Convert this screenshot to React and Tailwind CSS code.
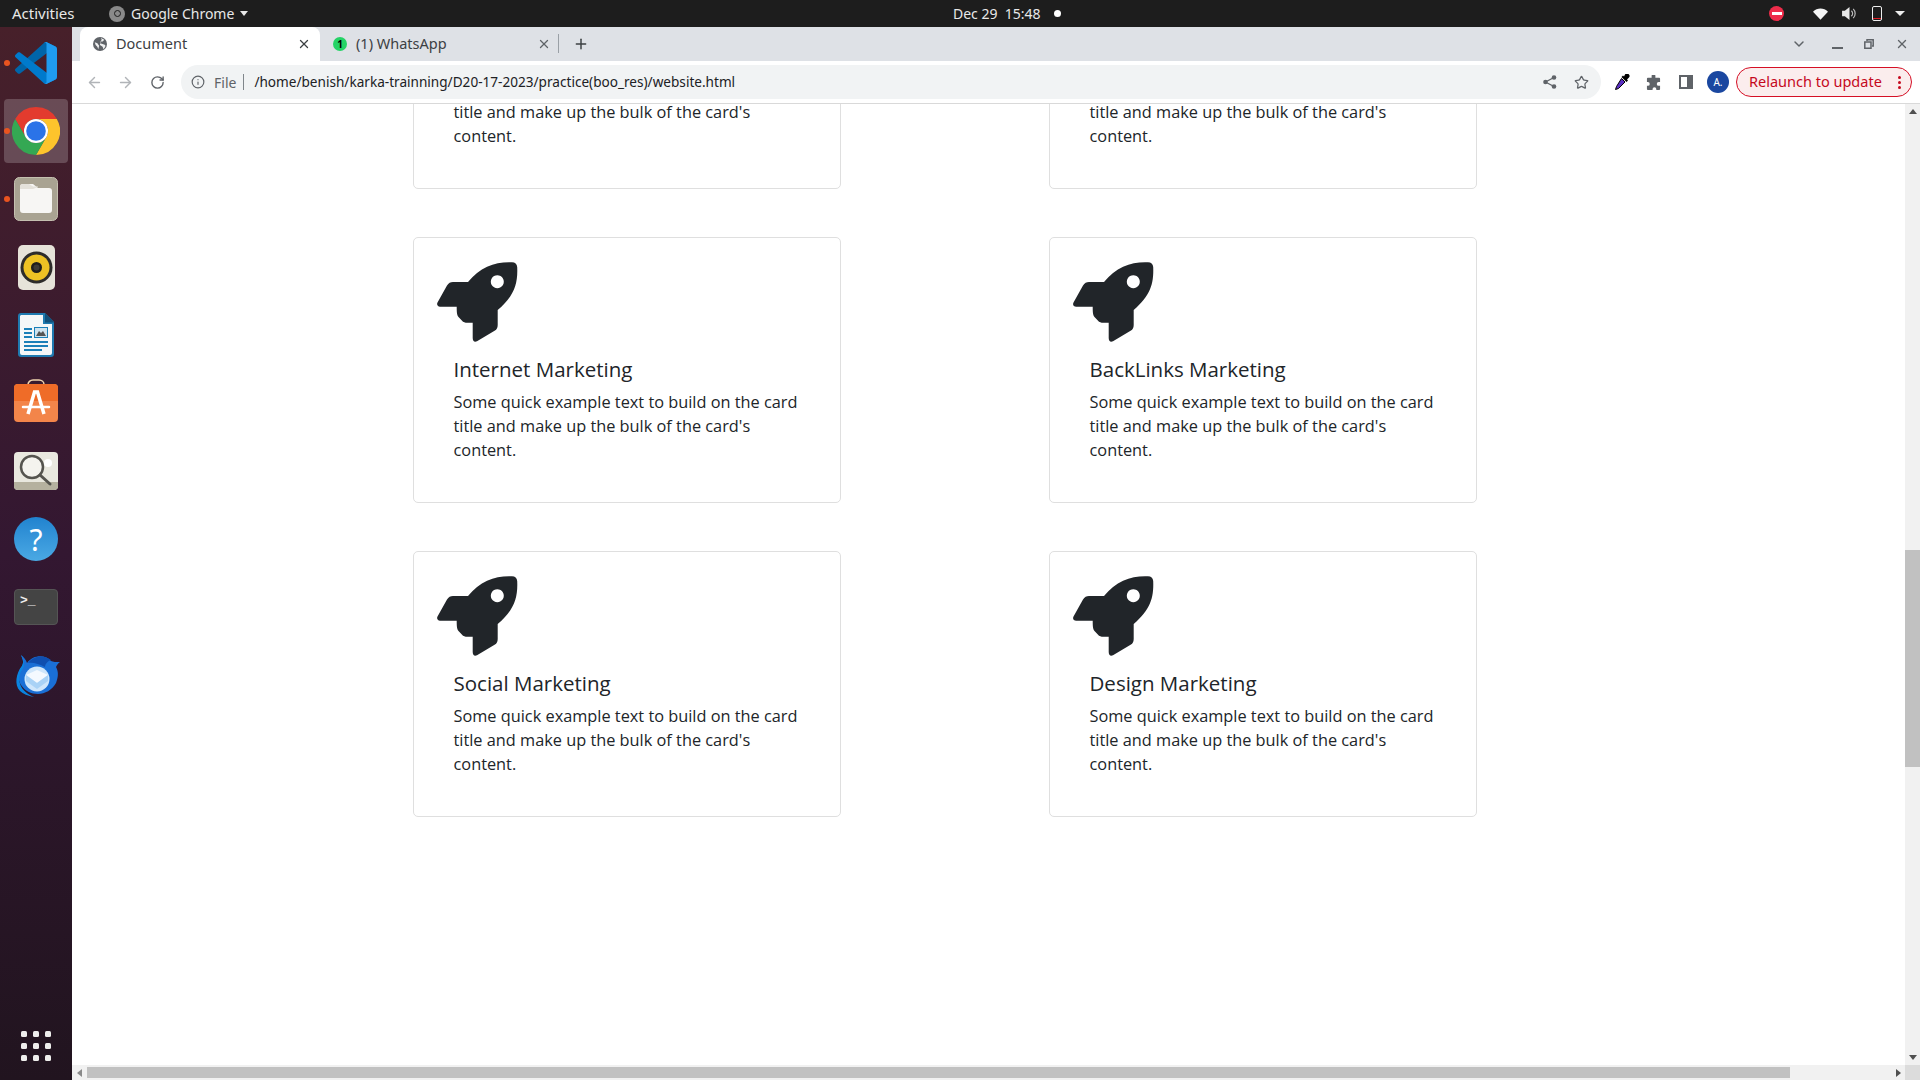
import { ArrowLeft, ArrowRight, RotateCw, Info, Star, X, Plus, ChevronDown } from 'lucide-react'

const topCards = ['Email Marketing', 'Content Marketing']
const cards = ['Internet Marketing', 'BackLinks Marketing', 'Social Marketing', 'Design Marketing']

const Rocket = () => (
  <svg viewBox="0 0 100 100" className="w-[100px] h-[100px] block">
    <path
      fill="#212529"
      fillRule="evenodd"
      d="M82 12.300 C85 12.300 87 14 87.200 17 C88 34 84 46 67.700 60 L67.700 75 C67.700 78 66.500 79.500 65 80.500 L47 91.200 C44.500 92.500 42.700 91 42.700 88 L42.700 72.700 C38.500 73 35.500 73 33 71.700 L28.500 67 C27 65 26.700 63 26.700 56.700 L10 56.700 C7.500 56.700 6.500 54.500 7.500 52.500 L17 35.500 C18.500 33 20.500 32 23 32 L38 32 C50 17 66 11.500 82 12.300 Z M67.300 25.200 a6.500 6.500 0 1 0 0.010 0 Z"
    />
  </svg>
)

const Card = ({ title }) => (
  <div className="border border-[#dfdfdf] rounded-[5px] bg-white h-[266px] pt-3 pl-4 font-['Open_Sans',sans-serif]">
    <Rocket />
    <div className="pl-[23.500px] pr-8 mt-2 text-[#212529]">
      <h5 className="text-[20.500px] leading-[22px] font-medium mb-[10px]">{title}</h5>
      <p className="text-[16.320px] leading-6">
        Some quick example text to build on the card title and make up the bulk of the card's content.
      </p>
    </div>
  </div>
)

const ChromeLogo = ({ size = 48 }) => (
  <svg viewBox="0 0 48 48" width={size} height={size}>
    <path fill="#e33b2e" d="M24 0a24 24 0 0 1 20.800 12H24a12 12 0 0 0-10.400 18L3.200 12A24 24 0 0 1 24 0z" />
    <path fill="#fdc42c" d="M24 12H44.800A24 24 0 0 1 24 48L34.400 30A12 12 0 0 0 24 12z" />
    <path fill="#34a853" d="M3.200 12L13.600 30A12 12 0 0 0 34.400 30L24 48A24 24 0 0 1 3.200 12z" />
    <circle cx="24" cy="24" r="12" fill="#fff" />
    <circle cx="24" cy="24" r="9.800" fill="#2a73e8" />
  </svg>
)

const VsCode = () => (
  <svg viewBox="0 0 100 100" width="42" height="42">
    <path fill="#0065A9" d="M96.4614 10.7962L75.8569 0.875542C73.4719 -0.272773 70.6217 0.211611 68.75 2.08333L1.29858 63.5832C-0.515693 65.2373 -0.513607 68.0937 1.30308 69.7452L6.81272 74.754C8.29793 76.1042 10.5347 76.2036 12.1338 74.9905L93.3609 13.3699C96.086 11.3026 100 13.2462 100 16.6667V16.4275C100 14.0265 98.6246 11.8378 96.4614 10.7962Z" />
    <path fill="#007ACC" d="M96.4614 89.2038L75.8569 99.1245C73.4719 100.273 70.6217 99.7884 68.75 97.9167L1.29858 36.4168C-0.515693 34.7627 -0.513607 31.9063 1.30308 30.2548L6.81272 25.246C8.29793 23.8958 10.5347 23.7964 12.1338 25.0095L93.3609 86.6301C96.086 88.6974 100 86.7538 100 83.3333V83.5725C100 85.9735 98.6246 88.1622 96.4614 89.2038Z" />
    <path fill="#1F9CF0" d="M75.8578 99.1263C73.4721 100.274 70.6219 99.7885 68.75 97.9166C71.0564 100.223 75 98.5895 75 95.3278V4.67213C75 1.41039 71.0564 -0.223106 68.75 2.08329C70.6219 0.211402 73.4721 -0.273666 75.8578 0.873633L96.4587 10.7807C98.6234 11.8217 100 14.0112 100 16.4132V83.5871C100 85.9891 98.6234 88.1786 96.4586 89.2196L75.8578 99.1263Z" />
  </svg>
)

const FilesIcon = () => (
  <svg viewBox="0 0 44 44" width="44" height="44">
    <rect x="0.500" y="0.500" width="43" height="43" rx="5" fill="#a9a392" stroke="#c5c0b0" />
    <path fill="#f7f6f4" d="M6 10a3 3 0 0 1 3-3h10l5 4h11a3 3 0 0 1 3 3v19a3 3 0 0 1-3 3H9a3 3 0 0 1-3-3z" />
    <path fill="#e4e1da" d="M6 12h13l5-2v-0.500H19l-4-2.500H9a3 3 0 0 0-3 3z" />
  </svg>
)

const RhythmIcon = () => (
  <svg viewBox="0 0 37 45" width="37" height="45">
    <rect x="0" y="0" width="37" height="45" rx="5" fill="#e6e3d9" />
    <circle cx="18.500" cy="22.500" r="16" fill="#2d2c2a" />
    <circle cx="18.500" cy="22.500" r="13" fill="#edc224" />
    <circle cx="18.500" cy="22.500" r="5.500" fill="#1f1e1c" />
    <circle cx="18.500" cy="22.500" r="3" fill="#3c3a36" />
  </svg>
)

const WriterIcon = () => (
  <svg viewBox="0 0 36 44" width="36" height="44">
    <path fill="#1f7ab0" d="M3 0h24l9 9v32a3 3 0 0 1-3 3H3a3 3 0 0 1-3-3V3a3 3 0 0 1 3-3z" />
    <path fill="#f5f7f8" d="M3 2h22v9h9v29a2 2 0 0 1-2 2H4a2 2 0 0 1-2-2V3z" />
    <path fill="#13507a" d="M27 0l9 9v0.500h-9z" />
    <g fill="#1b7fb8">
      <rect x="6" y="15" width="8" height="2" />
      <rect x="6" y="19" width="8" height="2" />
      <rect x="6" y="23" width="8" height="2" />
      <rect x="6" y="28" width="24" height="2" />
      <rect x="6" y="32" width="24" height="2" />
      <rect x="6" y="36" width="18" height="2" />
    </g>
    <rect x="16.500" y="14.500" width="13" height="10" fill="#cfe3ef" stroke="#1b7fb8" />
    <path fill="#555" d="M18 23l3-5 2 2 2-2 3 5z" />
  </svg>
)

const StoreIcon = () => (
  <svg viewBox="0 0 44 49" width="44" height="49">
    <path d="M14 8V5.500a5 4.500 0 0 1 5-4.500h6a5 4.500 0 0 1 5 4.500V8" fill="none" stroke="#efd3ae" strokeWidth="1.500" />
    <rect x="0" y="5" width="44" height="38" rx="4" fill="#f3854a" />
    <path d="M4 5h36a4 4 0 0 1 4 4v13H0V9a4 4 0 0 1 4-4z" fill="#ef6c28" />
    <path d="M14 35 L20.500 13 H23.500 L30 35" fill="none" stroke="#fff" strokeWidth="3.500" />
    <path d="M9 28H35" stroke="#fff" strokeWidth="2.500" strokeLinecap="round" />
  </svg>
)

const ViewerIcon = () => (
  <svg viewBox="0 0 44 38" width="44" height="38">
    <rect x="0" y="0" width="44" height="38" rx="4" fill="#e9e8df" />
    <path d="M0 30h44v4a4 4 0 0 1-4 4H4a4 4 0 0 1-4-4z" fill="#b5b19f" />
    <circle cx="34" cy="11" r="4" fill="#fff" />
    <circle cx="18" cy="15" r="11" fill="#f4f3ee" stroke="#55544f" strokeWidth="2.500" />
    <path d="M26 23l10 9" stroke="#55544f" strokeWidth="3" strokeLinecap="round" />
  </svg>
)

const HelpIcon = () => (
  <div className="w-11 h-11 rounded-full bg-gradient-to-b from-[#2083cf] to-[#4aa9e4] flex items-center justify-center text-white text-[30px] font-['Noto_Sans',sans-serif]">
    ?
  </div>
)

const TerminalIcon = () => (
  <div className="w-11 h-9 rounded-[4px] bg-[#444444] border border-[#555555] text-[#eeeeee] text-[13px] leading-none pl-[5px] pt-[4px] font-['Liberation_Mono',monospace] font-bold">
    &gt;_
  </div>
)

const ThunderbirdIcon = () => (
  <svg viewBox="0 0 48 46" width="48" height="46">
    <path fill="#1a6fd6" d="M9 3c2 5 3 7 1 11C5 20 6 28 9 33c4 6 10 9 17 9 7 0 14-4 18-11 2-5 3-11 0-16 1-2 2-4 4-5-4 0-7 0-9-1C34 3 22 2 15 11 14 8 12 5 9 3z" />
    <path fill="#0f4fb0" d="M16 11C21 4 31 2 39 8c-3 1-6 4-6 7-6-3-12-5-17-4z" />
    <path fill="#0a84e0" d="M9 3c2 5 3 7 1 11C4 21 2 33 8 39c3 3 8 5 14 6C12 41 5 33 8 22c1-4 4-5 4-9 0-4-1-8-3-10z" />
    <circle cx="25" cy="27" r="12.500" fill="#cfe6fb" />
    <path fill="#f4f9ff" d="M14 23l11-5 11 5-11 8z" />
    <path fill="#a9d2f6" d="M14 23l11 8 11-8v6l-11 8-11-8z" />
  </svg>
)

const dockItems = [
  { key: 'code', icon: <VsCode />, running: true },
  { key: 'chrome', icon: <ChromeLogo />, running: true, active: true },
  { key: 'files', icon: <FilesIcon />, running: true },
  { key: 'rhythm', icon: <RhythmIcon /> },
  { key: 'writer', icon: <WriterIcon /> },
  { key: 'store', icon: <StoreIcon /> },
  { key: 'viewer', icon: <ViewerIcon /> },
  { key: 'help', icon: <HelpIcon /> },
  { key: 'terminal', icon: <TerminalIcon /> },
  { key: 'bird', icon: <ThunderbirdIcon /> },
]

function Dock() {
  return (
    <div className="w-[72px] shrink-0 flex flex-col bg-gradient-to-b from-[#47202a] via-[#331731] to-[#21141f] pt-[2px]">
      {dockItems.map(item => (
        <div key={item.key} className="relative h-[68px] flex items-center justify-center">
          {item.active && <div className="absolute left-1 right-1 top-[2px] bottom-[2px] rounded-[4px] bg-white/20" />}
          {item.running && <div className="absolute left-[4px] top-[31px] w-[6px] h-[6px] rounded-full bg-[#e95420]" />}
          <div className="relative">{item.icon}</div>
        </div>
      ))}
      <div className="mt-auto mb-[19px] ml-[21px] grid grid-cols-[6px_6px_6px] gap-[6px]">
        {Array.from({ length: 9 }).map((_, i) => (
          <div key={i} className="w-[6px] h-[6px] rounded-[1.5px] bg-[#eeeeec]" />
        ))}
      </div>
    </div>
  )
}

function TopBar() {
  return (
    <div className="h-[27px] shrink-0 bg-[#1d1d1d] text-[#e8e8e8] text-[14px] flex items-center relative font-['Noto_Sans',sans-serif]">
      <span className="ml-3 w-[97px] text-[15px]">Activities</span>
      <span className="w-4 h-4 rounded-full bg-[#8a8a8a] flex items-center justify-center">
        <span className="w-[7px] h-[7px] rounded-full border border-[#1d1d1d]" />
      </span>
      <span className="ml-[6px]">Google Chrome</span>
      <span className="ml-[6px] w-0 h-0 border-x-[4px] border-x-transparent border-t-[5px] border-t-[#e8e8e8]" />
      <div className="absolute left-[953px] top-0 h-[27px] flex items-center gap-[9px]">
        <span>Dec 29&nbsp; 15:48</span>
        <span className="ml-[4px] w-[7px] h-[7px] rounded-full bg-white" />
      </div>
      <div className="ml-auto flex items-center">
        <span className="w-[15px] h-[15px] rounded-full bg-[#ee2c4a] flex items-center justify-center">
          <span className="w-[10px] h-[3px] bg-white" />
        </span>
        <svg viewBox="0 0 16 12" className="w-[15px] h-[12px] ml-[29px]">
          <path fill="#f4f4f4" d="M0 3.500C4.500 -1 11.500 -1 16 3.500L8 12z" />
        </svg>
        <svg viewBox="0 0 16 14" className="w-[15px] h-[13px] ml-[14px]">
          <path fill="#e8e8e8" d="M0 4h3l5-4v14l-5-4H0z" />
          <path fill="none" stroke="#bbbbbb" strokeWidth="1.300" d="M10 4a4 4 0 0 1 0 6M12 2a7 7 0 0 1 0 10" />
        </svg>
        <span className="ml-[15px] relative w-[10px] h-[15px] rounded-[2px] border border-[#eeeeee]">
          <span className="absolute left-0 right-0 bottom-[1px] h-[1px] bg-[#e01b24]" />
        </span>
        <span className="ml-[13px] mr-[15px] w-0 h-0 border-x-[5px] border-x-transparent border-t-[5px] border-t-[#eeeeee]" />
      </div>
    </div>
  )
}

function Tabs() {
  return (
    <div className="h-[34px] shrink-0 bg-[#dee1e6] flex items-end pl-[8px] text-[14.500px] text-[#3c4043]">
      <div className="w-[240px] h-[34px] bg-white rounded-t-[8px] flex items-center pl-[13px] pr-[9px]">
        <svg viewBox="0 0 16 16" className="w-[14px] h-[14px]">
          <circle cx="8" cy="8" r="8" fill="#5f6368" />
          <path fill="#fff" d="M2 6l3 1 2 3-1 4-1-3-2-2zM9 1l4 2-2 2-2 0-1 2 3 1 3 1 0 2-2 3-1-3-3-2 0-3 2-3z" opacity="0.900" />
        </svg>
        <span className="ml-[9px]">Document</span>
        <X className="ml-auto w-[14px] h-[14px] text-[#3c4043]" strokeWidth={2.2} />
      </div>
      <div className="w-[238px] h-[34px] flex items-center pl-[13px] pr-[7px]">
        <span className="w-[14px] h-[14px] rounded-full bg-[#25d366] flex items-center justify-center text-[10px] font-bold text-black leading-none">1</span>
        <span className="ml-[9px]">(1) WhatsApp</span>
        <X className="ml-auto w-[14px] h-[14px] text-[#5f6368]" strokeWidth={2.2} />
      </div>
      <div className="w-px h-[19px] bg-[#9aa0a6] mb-[8px]" />
      <Plus className="ml-[14px] mb-[9px] w-[16px] h-[16px] text-[#3c4043]" strokeWidth={2.2} />
      <ChevronDown className="ml-auto mb-[9px] w-[16px] h-[16px] text-[#5f6368]" strokeWidth={2.2} />
      <span className="ml-[25px] mb-[12px] w-[11px] h-[2px] bg-[#5f6368]" />
      <svg viewBox="0 0 10 10" className="ml-[21px] mb-[12px] w-[10px] h-[10px]">
        <path fill="none" stroke="#5f6368" strokeWidth="1.500" d="M3 2V0.800H9.200V7H8M0.800 3H7V9.200H0.800z" />
      </svg>
      <X className="ml-[21px] mr-[11px] mb-[10px] w-[14px] h-[14px] text-[#5f6368]" strokeWidth={2.4} />
    </div>
  )
}

function Toolbar() {
  return (
    <div className="h-[43px] shrink-0 bg-white border-b border-[#d9d9d9] flex items-center text-[14px]">
      <ArrowLeft className="ml-[14px] w-[17px] h-[17px] text-[#b1b4b8]" strokeWidth={2} />
      <ArrowRight className="ml-[14px] w-[17px] h-[17px] text-[#b1b4b8]" strokeWidth={2} />
      <RotateCw className="ml-[16px] w-[15px] h-[15px] text-[#5f6368]" strokeWidth={2.2} />
      <div className="ml-[16px] w-[1420px] h-[34px] rounded-full bg-[#f1f3f4] flex items-center pl-[10px] pr-[12px]">
        <Info className="w-[14px] h-[14px] text-[#5f6368]" strokeWidth={2} />
        <span className="ml-[9px] text-[#5f6368]">File</span>
        <span className="ml-[7px] w-px h-[16px] bg-[#80868b]" />
        <span className="ml-[10px] text-[#202124] text-[13.600px]">/home/benish/karka-trainning/D20-17-2023/practice(boo_res)/website.html</span>
        <svg viewBox="0 0 14 14" className="ml-auto w-[14px] h-[14px]">
          <g fill="#5f6368">
            <circle cx="11" cy="2.500" r="2.300" />
            <circle cx="2.500" cy="7" r="2.300" />
            <circle cx="11" cy="11.500" r="2.300" />
          </g>
          <path stroke="#5f6368" strokeWidth="1.300" fill="none" d="M11 2.500L2.500 7L11 11.500" />
        </svg>
        <Star className="ml-[17px] w-[15px] h-[15px] text-[#5f6368]" strokeWidth={2} />
      </div>
      <svg viewBox="0 0 16 16" className="ml-[13px] w-[16px] h-[16px]">
        <path fill="#000" d="M11 0.500a2.500 2.500 0 0 1 4 3L13 5.500l1 1-1.500 1.500-5-5L9 1.500l1 1z" />
        <path fill="#5a2fc2" stroke="#000" strokeWidth="1" d="M7.500 4.500l3.500 3.500-6.500 6.500-3 1 1-3z" />
      </svg>
      <svg viewBox="0 0 16 16" className="ml-[16px] w-[15px] h-[15px]">
        <path fill="#5f6368" d="M6 1a2 2 0 0 1 4 0v2h4a1 1 0 0 1 1 1v3.500h-1.500a2 2 0 0 0 0 4H15V15a1 1 0 0 1-1 1H11v-1a2 2 0 0 0-4 0v1H2a1 1 0 0 1-1-1v-3.500H2a2 2 0 0 0 0-4H1V4a1 1 0 0 1 1-1h4z" />
      </svg>
      <span className="ml-[18px] w-[14px] h-[14px] border-2 border-[#5f6368] border-r-[6px]" />
      <span className="ml-[14px] w-[22px] h-[22px] rounded-full bg-[#1a47a0] text-white text-[10px] flex items-center justify-center">A.</span>
      <div className="ml-[7px] w-[176px] h-[30px] rounded-full bg-[#fbeded] border border-[#d50f25] flex items-center pl-[12px] text-[#c5091d] text-[14.500px]">
        <span>Relaunch to update</span>
        <span className="ml-auto mr-[10px] flex flex-col gap-[2px]">
          <span className="w-[3px] h-[3px] rounded-full bg-[#c5091d]" />
          <span className="w-[3px] h-[3px] rounded-full bg-[#c5091d]" />
          <span className="w-[3px] h-[3px] rounded-full bg-[#c5091d]" />
        </span>
      </div>
    </div>
  )
}

function Viewport() {
  return (
    <div className="flex-1 min-h-0 flex bg-white">
      <div className="flex-1 min-w-0 overflow-hidden">
        <div className="-mt-[181px] pl-[341px] grid grid-cols-[428px_428px] gap-x-[208px] gap-y-[48px]">
          {[...topCards, ...cards].map(title => (
            <Card key={title} title={title} />
          ))}
        </div>
      </div>
      <div className="w-[15px] shrink-0 bg-[#f1f1f1] flex flex-col items-center">
        <span className="mt-[5px] w-0 h-0 border-x-[4px] border-x-transparent border-b-[5px] border-b-[#505050]" />
        <div className="mt-[436px] w-full h-[217px] bg-[#c1c1c1]" />
        <span className="mt-auto mb-[5px] w-0 h-0 border-x-[4px] border-x-transparent border-t-[5px] border-t-[#505050]" />
      </div>
    </div>
  )
}

function HScrollbar() {
  return (
    <div className="h-[15px] shrink-0 bg-[#f1f1f1] flex items-center">
      <span className="ml-[5px] w-0 h-0 border-y-[4px] border-y-transparent border-r-[5px] border-r-[#8a8a8a]" />
      <div className="ml-[5px] w-[1703px] h-[11px] bg-[#c1c1c1]" />
      <span className="ml-[106px] w-0 h-0 border-y-[4px] border-y-transparent border-l-[5px] border-l-[#505050]" />
      <span className="ml-auto w-[15px] h-[15px] bg-[#dcdcdc]" />
    </div>
  )
}

export default function App() {
  return (
    <div className="w-[1920px] h-[1080px] overflow-hidden flex flex-col font-['Noto_Sans',sans-serif]">
      <TopBar />
      <div className="flex-1 min-h-0 flex">
        <Dock />
        <div className="flex-1 min-w-0 flex flex-col">
          <Tabs />
          <Toolbar />
          <Viewport />
          <HScrollbar />
        </div>
      </div>
    </div>
  )
}
